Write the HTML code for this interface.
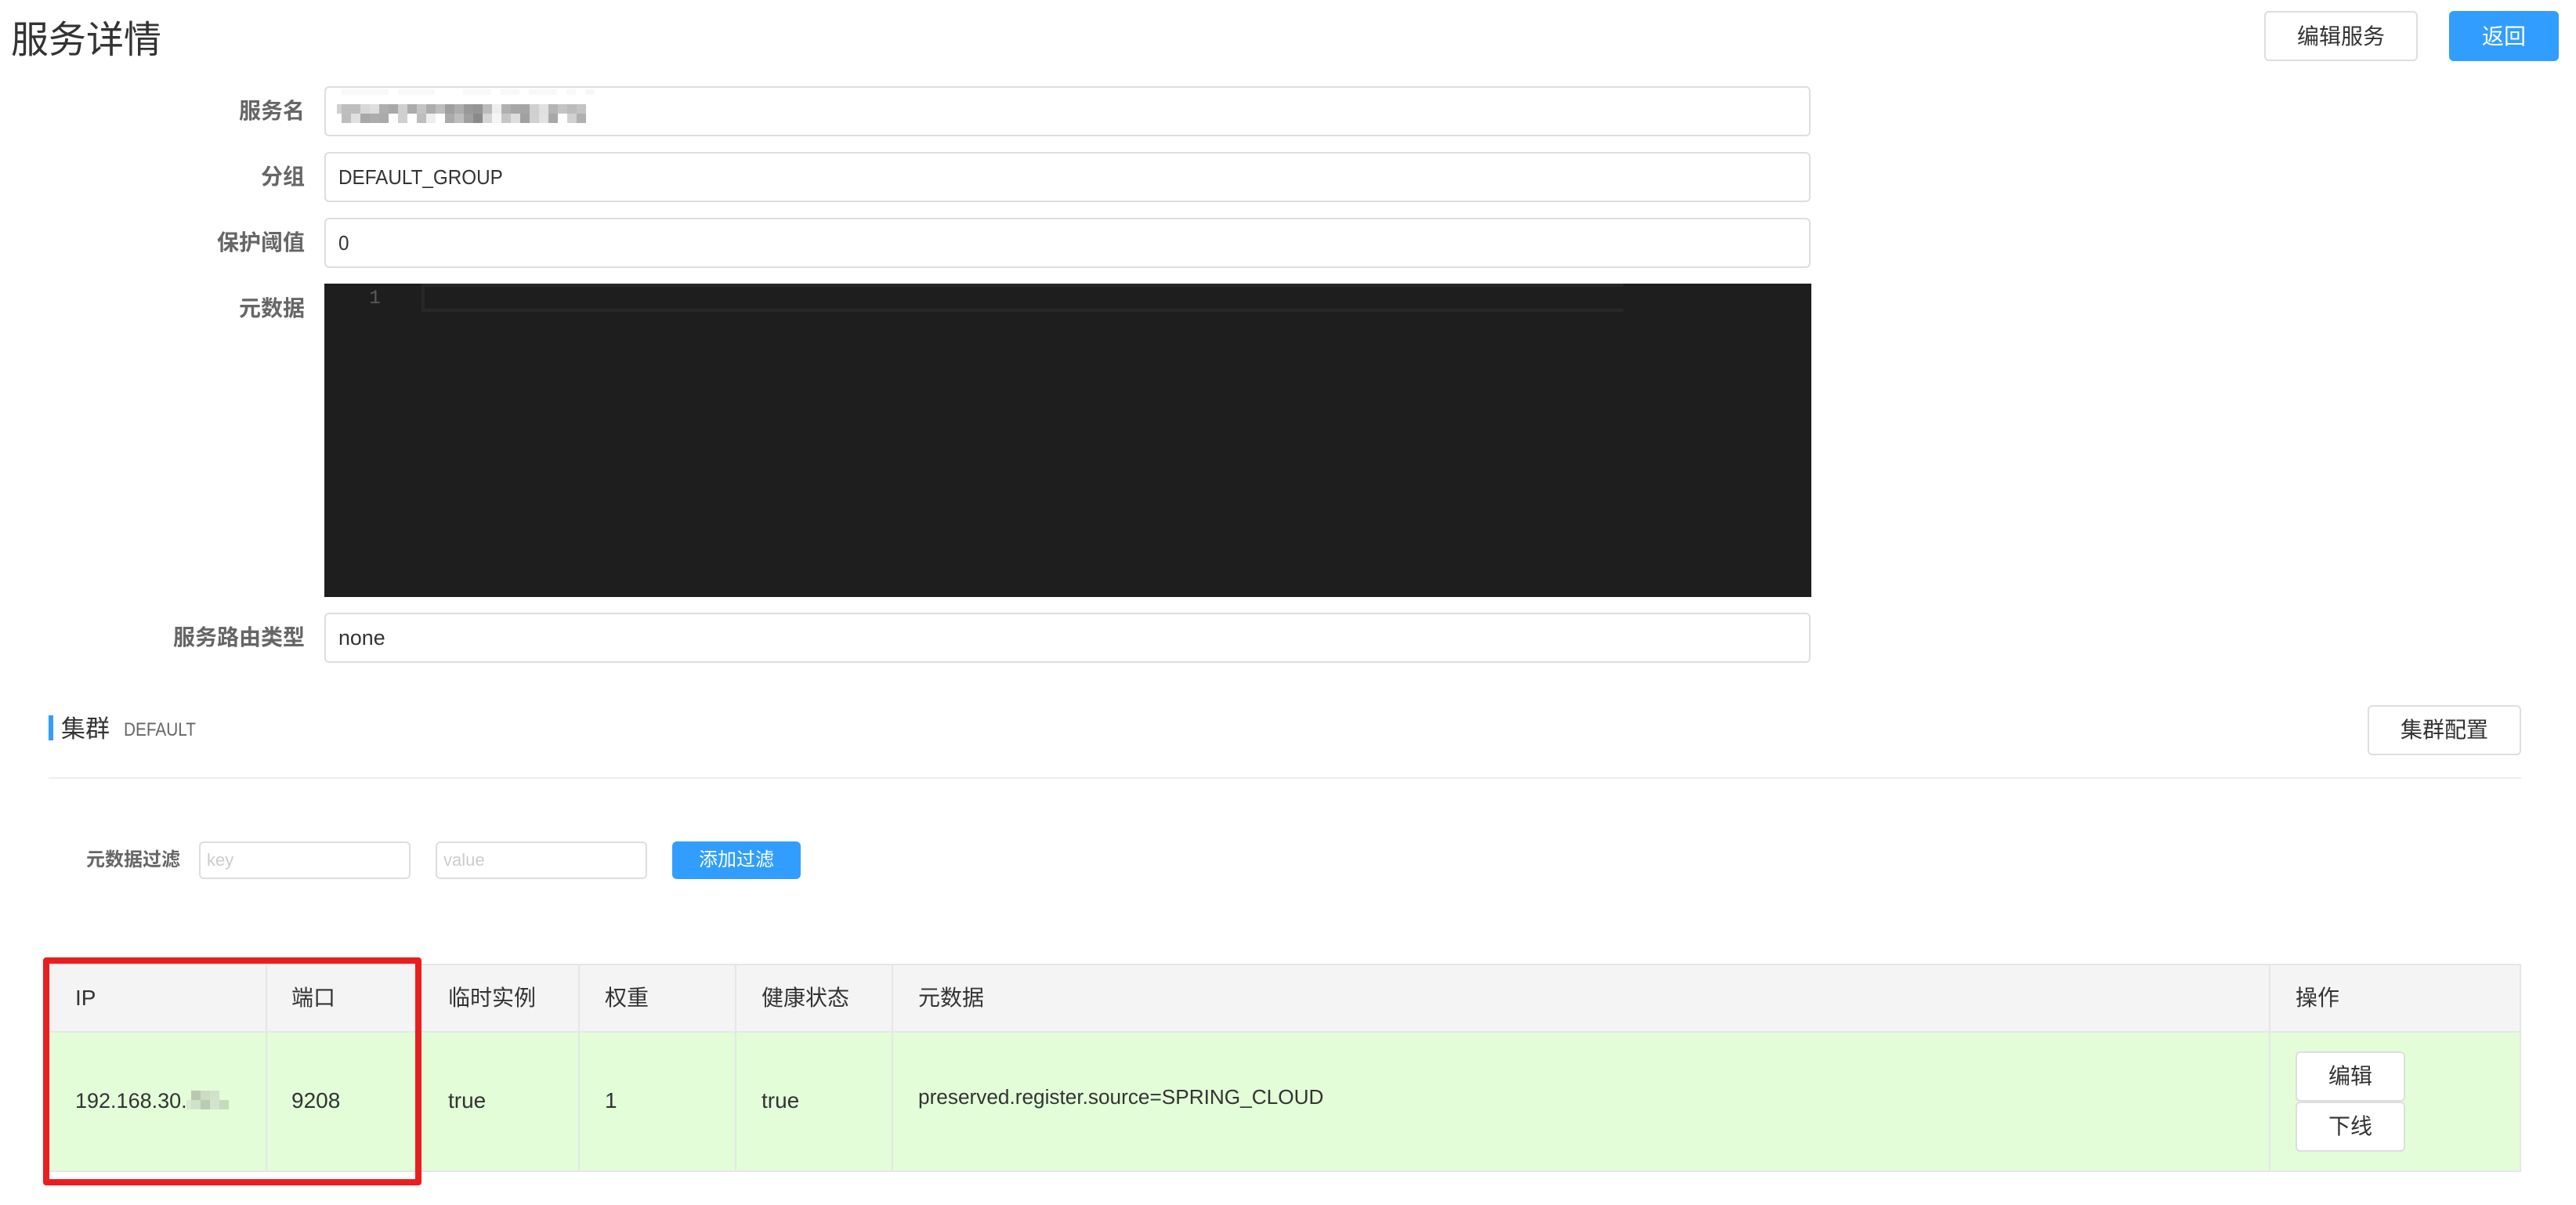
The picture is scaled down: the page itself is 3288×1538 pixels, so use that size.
<!DOCTYPE html>
<html lang="zh-CN">
<head>
<meta charset="utf-8">
<title>服务详情</title>
<style>
html,body{margin:0;padding:0;background:#fff;width:3288px;height:1538px;overflow:hidden}
body{position:relative;font-family:"Liberation Sans","Noto Sans CJK SC",sans-serif;color:#333}
.a{position:absolute;box-sizing:border-box}
.t{position:absolute;white-space:nowrap}
.inp{position:absolute;box-sizing:border-box;left:414px;width:1897px;height:64px;border:2px solid #dedede;border-radius:6px;background:#fff}
.lb{position:absolute;right:2899px;white-space:nowrap;font-size:28px;line-height:40px;font-weight:700;color:#666}
.v{position:absolute;left:432px;white-space:nowrap;font-size:26px;line-height:40px;color:#333;transform:scaleX(.933);transform-origin:left center}
.btn{position:absolute;box-sizing:border-box;border:2px solid #dedede;border-radius:6px;background:#fff;color:#333;text-align:center;font-size:28px;white-space:nowrap}
.pri{background:#319eff;border:0;color:#fff}
.th{position:absolute;white-space:nowrap;font-size:28px;line-height:40px;top:1254px;color:#333}
.td{position:absolute;white-space:nowrap;font-size:28px;line-height:40px;top:1385px;color:#333}
.cl{position:absolute;top:1231px;width:2px;height:264px;background:#e6e6e6}
.b{position:absolute;width:12px;height:12px}
.f{position:absolute;top:114px;height:7px;background:#f8f8f8}
</style>
</head>
<body>
<div class="t" style="left:14px;top:18px;font-size:48px;line-height:68px;color:#333;font-weight:400">服务详情</div>
<div class="btn" style="left:2890px;top:14px;width:196px;height:64px;line-height:61px">编辑服务</div>
<div class="btn pri" style="left:3126px;top:14px;width:140px;height:64px;line-height:65px">返回</div>

<div class="lb" style="top:122px">服务名</div>
<div class="inp" style="top:110px"></div>
<div class="lb" style="top:206px">分组</div>
<div class="inp" style="top:194px"></div>
<div class="v" style="top:206px">DEFAULT_GROUP</div>
<div class="lb" style="top:290px">保护阈值</div>
<div class="inp" style="top:278px"></div>
<div class="v" style="top:290px">0</div>

<!-- pixelated name -->
<div id="nm">
<div class="b" style="left:430px;top:133px;width:6px;background:#d0d0d0"></div>
<div class="b" style="left:436px;top:133px;background:#bebebe"></div><div class="b" style="left:448px;top:133px;background:#bebebe"></div><div class="b" style="left:460px;top:133px;background:#d8d8d8"></div><div class="b" style="left:472px;top:133px;background:#dedede"></div><div class="b" style="left:484px;top:133px;background:#aeaeae"></div><div class="b" style="left:496px;top:133px;background:#a8a8a8"></div><div class="b" style="left:508px;top:133px;background:#cfcfcf"></div><div class="b" style="left:520px;top:133px;background:#ababab"></div><div class="b" style="left:532px;top:133px;background:#c4c4c4"></div><div class="b" style="left:544px;top:133px;background:#acacac"></div><div class="b" style="left:556px;top:133px;background:#bdbdbd"></div><div class="b" style="left:568px;top:133px;background:#9f9f9f"></div><div class="b" style="left:580px;top:133px;background:#adadad"></div><div class="b" style="left:592px;top:133px;background:#999"></div><div class="b" style="left:604px;top:133px;background:#959595"></div><div class="b" style="left:616px;top:133px;background:#bbb"></div><div class="b" style="left:628px;top:133px;background:#eee"></div><div class="b" style="left:640px;top:133px;background:#b0b0b0"></div><div class="b" style="left:652px;top:133px;background:#a6a6a6"></div><div class="b" style="left:664px;top:133px;background:#a5a5a5"></div><div class="b" style="left:676px;top:133px;background:#d0d0d0"></div><div class="b" style="left:688px;top:133px;background:#e0e0e0"></div><div class="b" style="left:700px;top:133px;background:#b4b4b4"></div><div class="b" style="left:712px;top:133px;background:#c4c4c4"></div><div class="b" style="left:724px;top:133px;background:#bbb"></div><div class="b" style="left:736px;top:133px;background:#c4c4c4"></div>
<div class="b" style="left:436px;top:145px;background:#bdbdbd"></div><div class="b" style="left:448px;top:145px;background:#e0e0e0"></div><div class="b" style="left:460px;top:145px;background:#a8a8a8"></div><div class="b" style="left:472px;top:145px;background:#adadad"></div><div class="b" style="left:484px;top:145px;background:#aaa"></div><div class="b" style="left:496px;top:145px;background:#fdfdfd"></div><div class="b" style="left:508px;top:145px;background:#cfcfcf"></div><div class="b" style="left:532px;top:145px;background:#bdbdbd"></div><div class="b" style="left:544px;top:145px;background:#eee"></div><div class="b" style="left:568px;top:145px;background:#aaa"></div><div class="b" style="left:580px;top:145px;background:#bdbdbd"></div><div class="b" style="left:592px;top:145px;background:#9f9f9f"></div><div class="b" style="left:604px;top:145px;background:#8a8a8a"></div><div class="b" style="left:616px;top:145px;background:#d5d5d5"></div><div class="b" style="left:628px;top:145px;background:#f5f5f5"></div><div class="b" style="left:640px;top:145px;background:#c5c5c5"></div><div class="b" style="left:652px;top:145px;background:#ddd"></div><div class="b" style="left:664px;top:145px;background:#a0a0a0"></div><div class="b" style="left:676px;top:145px;background:#d0d0d0"></div><div class="b" style="left:688px;top:145px;background:#e2e2e2"></div><div class="b" style="left:700px;top:145px;background:#a8a8a8"></div><div class="b" style="left:724px;top:145px;background:#d0d0d0"></div><div class="b" style="left:736px;top:145px;background:#b0b0b0"></div>
<div class="f" style="left:436px;width:60px"></div><div class="f" style="left:508px;width:47px"></div><div class="f" style="left:591px;width:36px"></div><div class="f" style="left:639px;width:24px"></div><div class="f" style="left:675px;width:36px"></div><div class="f" style="left:723px;width:12px"></div><div class="f" style="left:747px;width:12px"></div>
</div>

<div class="lb" style="top:374px">元数据</div>
<div class="a" style="left:414px;top:362px;width:1898px;height:400px;background:#1e1e1e"></div>
<div class="a" style="left:538px;top:362px;width:1534px;height:36px;border:4px solid #282828;border-right:0"></div>
<div class="t" style="left:471px;top:364px;font-family:'Liberation Mono',monospace;font-size:25px;line-height:34px;color:#5a5a5a">1</div>

<div class="lb" style="top:794px">服务路由类型</div>
<div class="inp" style="top:782px"></div>
<div class="v" style="top:794px;transform:none;font-size:26.8px">none</div>

<div class="a" style="left:62px;top:913px;width:6px;height:32px;background:#319eff"></div>
<div class="t" style="left:78px;top:909px;font-size:31px;line-height:44px;color:#333">集群</div>
<div class="t" style="left:158px;top:915px;font-size:24px;line-height:34px;color:#666;transform:scaleX(.865);transform-origin:left center">DEFAULT</div>
<div class="btn" style="left:3022px;top:900px;width:196px;height:64px;line-height:59px">集群配置</div>
<div class="a" style="left:62px;top:992px;width:3156px;height:2px;background:#eee"></div>

<div class="t" style="left:110px;top:1081px;font-size:24px;line-height:34px;font-weight:700;color:#666">元数据过滤</div>
<div class="a" style="left:254px;top:1074px;width:270px;height:48px;border:2px solid #dedede;border-radius:6px"></div>
<div class="t" style="left:264px;top:1080px;font-size:22px;line-height:36px;color:#ccc">key</div>
<div class="a" style="left:556px;top:1074px;width:270px;height:48px;border:2px solid #dedede;border-radius:6px"></div>
<div class="t" style="left:566px;top:1080px;font-size:22px;line-height:36px;color:#ccc">value</div>
<div class="btn pri" style="left:858px;top:1074px;width:164px;height:48px;line-height:47px;font-size:24px">添加过滤</div>

<!-- table -->
<div class="a" style="left:62px;top:1230px;width:3156px;height:88px;background:#f4f4f4;border:2px solid #e6e6e6"></div>
<div class="a" style="left:62px;top:1316px;width:3156px;height:180px;background:#e2fdd8;border:2px solid #e6e6e6"></div>
<div class="cl" style="left:339px"></div>
<div class="cl" style="left:738px"></div>
<div class="cl" style="left:938px"></div>
<div class="cl" style="left:1138px"></div>
<div class="cl" style="left:2896px"></div>

<div class="th" style="left:96px">IP</div>
<div class="th" style="left:372px">端口</div>
<div class="th" style="left:572px">临时实例</div>
<div class="th" style="left:772px">权重</div>
<div class="th" style="left:972px">健康状态</div>
<div class="th" style="left:1172px">元数据</div>
<div class="th" style="left:2930px">操作</div>

<div class="td" style="left:96px;font-size:27px">192.168.30.</div>
<div class="b" style="left:244px;top:1392px;background:#b8c9b0"></div><div class="b" style="left:256px;top:1392px;background:#cbdcc3"></div><div class="b" style="left:268px;top:1392px;background:#d0e2c9"></div>
<div class="b" style="left:238px;top:1404px;width:6px;background:#d8ebd0"></div><div class="b" style="left:244px;top:1404px;background:#cfe2c7"></div><div class="b" style="left:256px;top:1404px;background:#b8ccb1"></div><div class="b" style="left:268px;top:1404px;background:#d2e4cb"></div><div class="b" style="left:280px;top:1404px;background:#c7dabf"></div>
<div class="td" style="left:372px">9208</div>
<div class="td" style="left:572px">true</div>
<div class="td" style="left:772px">1</div>
<div class="td" style="left:972px">true</div>
<div class="td" style="left:1172px;top:1380px;font-size:26.2px">preserved.register.source=SPRING_CLOUD</div>

<div class="btn" style="left:2930px;top:1342px;width:140px;height:64px;line-height:60px">编辑</div>
<div class="btn" style="left:2930px;top:1406px;width:140px;height:64px;line-height:60px">下线</div>

<!-- red highlight -->
<div class="a" style="left:55px;top:1222px;width:483px;height:291px;border:8px solid #e91f1f;border-radius:4px"></div>
</body>
</html>
